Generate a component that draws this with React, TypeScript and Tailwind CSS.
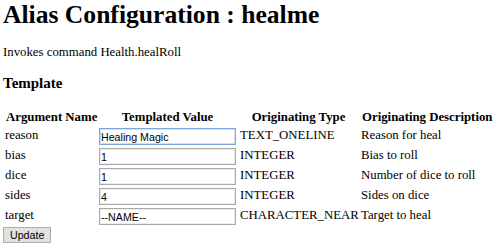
const rows = [
  { name: "reason", value: "Healing Magic", type: "TEXT_ONELINE", desc: "Reason for heal", focused: true },
  { name: "bias", value: "1", type: "INTEGER", desc: "Bias to roll" },
  { name: "dice", value: "1", type: "INTEGER", desc: "Number of dice to roll" },
  { name: "sides", value: "4", type: "INTEGER", desc: "Sides on dice" },
  { name: "target", value: "--NAME--", type: "CHARACTER_NEAR", desc: "Target to heal" },
]

export default function App() {
  return (
    <div className="w-[500px] h-[248px] overflow-hidden bg-white pl-[3px] text-black font-['Liberation_Serif',serif] text-[12.8px]">
      <h1 className="text-[25.6px] leading-[29px] font-bold">Alias Configuration : healme</h1>
      <p className="mt-[16px] leading-[15px]">Invokes command Health.healRoll</p>
      <h3 className="mt-[15px] text-[15px] leading-[17px] font-bold">Template</h3>

      {/* argument table */}
      <div className="mt-[17px] pl-[2px] grid grid-cols-[94px_141px_121px_1fr]">
        <div className="h-[16px] leading-[16px] font-bold pl-[1px] whitespace-nowrap">Argument Name</div>
        <div className="h-[16px] leading-[16px] font-bold w-[137px] text-center whitespace-nowrap">Templated Value</div>
        <div className="h-[16px] leading-[16px] font-bold text-center pr-[4px] whitespace-nowrap">Originating Type</div>
        <div className="h-[16px] leading-[16px] font-bold pl-[1px] whitespace-nowrap">Originating Description</div>

        {rows.map(r => (
          <div key={r.name} className="contents">
            <div className="h-[20px] leading-[20px]">{r.name}</div>
            <div className="h-[20px] pt-[3px]">
              <input
                readOnly
                value={r.value}
                className={`block w-[137px] h-[17px] px-[1px] border font-['Liberation_Sans',Arial,sans-serif] text-[10.67px] leading-[15px] outline-none ${
                  r.focused
                    ? "border-[#7ba7de] shadow-[inset_0_0_0_1px_#cfe0f5]"
                    : "border-[#a9a9a9] shadow-[inset_0_0_0_1px_#ececec]"
                }`}
              />
            </div>
            <div className="h-[20px] leading-[20px] whitespace-nowrap">{r.type}</div>
            <div className="h-[20px] leading-[20px] whitespace-nowrap">{r.desc}</div>
          </div>
        ))}
      </div>

      <button className="mt-[2px] h-[16px] px-[6px] border border-[#adadad] bg-[#e1e1e1] font-['Liberation_Sans',Arial,sans-serif] text-[10.67px] leading-[14px]">
        Update
      </button>
    </div>
  )
}
